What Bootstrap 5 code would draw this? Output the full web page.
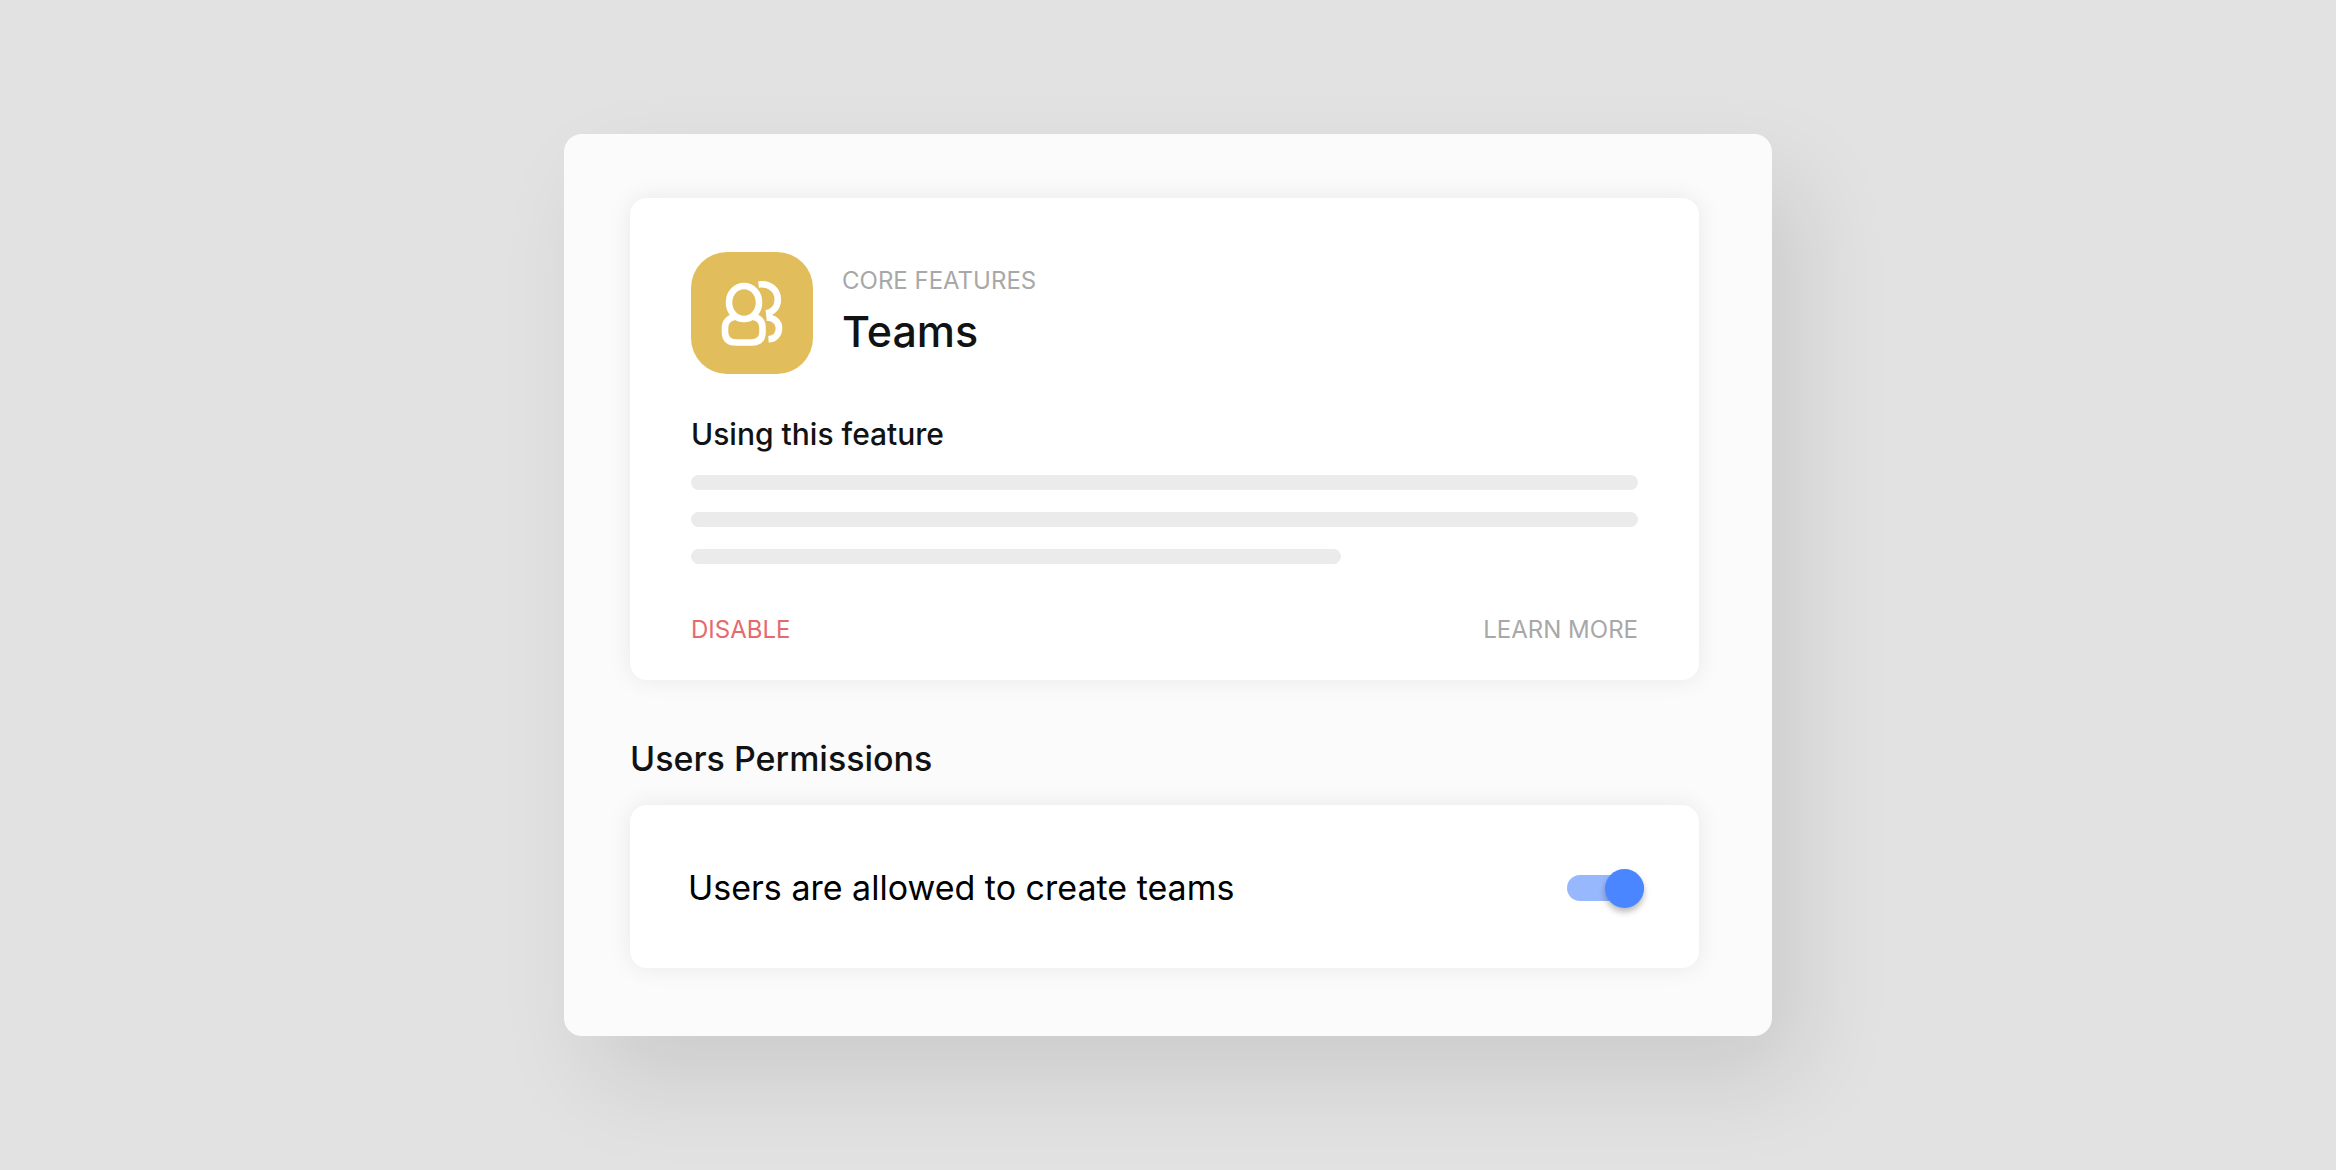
<!DOCTYPE html>
<html lang="en">
<head>
<meta charset="utf-8">
<meta name="viewport" content="width=device-width, initial-scale=1">
<title>Teams</title>
<link href="https://cdn.jsdelivr.net/npm/bootstrap@5.3.0/dist/css/bootstrap.min.css" rel="stylesheet">
<style>
  body { background: #e2e2e2; font-family: Inter, "Liberation Sans", sans-serif; color: #111213; }
  .settings-panel { width: 100%; max-width: 1208px; padding: 64px 73px 68px 66px; border-radius: 18px; background: #fbfbfb; box-shadow: 28px 44px 96px rgba(0,0,0,.1); }
  .tile { border: 0; border-radius: 17px; box-shadow: 0 0 24px rgba(0,0,0,.08); }
  .feature-body { padding: 54px 61px 32px; }
  .feature-icon { width: 122px; height: 122px; border-radius: 36px; background: #e1bd5c; }
  .feature-head { gap: 29px; }
  .eyebrow, .action { font-size: 24px; line-height: 36px; font-weight: 400; color: #a8a8a8; }
  .eyebrow { margin-bottom: 4px; }
  .action-danger { color: #e56a6e; }
  .feature-title { font-size: 43px; line-height: 56px; font-weight: 500; }
  .feature-sub { font-size: 30px; line-height: 40px; font-weight: 500; margin: 40px 0 21px; }
  .skeleton { gap: 22px; margin-bottom: 48px; }
  .bar { height: 15px; border-radius: 8px; background: #ebebeb; }
  .bar-short { width: 68.6%; }
  .section-title { font-size: 34px; line-height: 44px; font-weight: 500; margin: 57px 0 24px; }
  .option-body { padding: 59px 55px 56px 58px; }
  .option-label { font-size: 34px; line-height: 48px; color: #000; }
  .form-switch .toggle { position: relative; width: 77px; height: 26px; margin: 0; border: 0; border-radius: 13px; background: #c8c8c8; }
  .form-switch .toggle:checked { background: #98b8fd; }
  .toggle::before { content: ""; position: absolute; top: -6px; left: 0; width: 39px; height: 39px; border-radius: 50%; background: #fff; box-shadow: 0 4px 6px rgba(0,0,0,.28); }
  .toggle:checked::before { left: auto; right: 0; background: #4a86ff; }
</style>
</head>
<body>
<main class="min-vh-100 d-flex align-items-center justify-content-center">
  <div class="settings-panel">
    <section class="card tile">
      <div class="feature-body">
        <header class="feature-head d-flex align-items-center">
          <div class="feature-icon flex-shrink-0">
            <svg width="122" height="122" viewBox="0 0 122 122" fill="none" stroke="#fff" stroke-width="6.6" aria-hidden="true">
              <ellipse cx="53" cy="50.500" rx="15" ry="16.500"/>
              <path d="M43.500 65C37 66 34 70.500 34 76V80Q34 90.500 45 90.500H60.500Q71.500 90.500 71.500 80V76C71.500 70.500 69 66 62.500 65"/>
              <path d="M67.500 32.500C79 31 86.800 38 86.800 47.500C86.800 55 82 60.500 75 61.500"/>
              <path d="M75.500 65.500C83.500 65.500 88 70.500 88 76C88 82.500 84 87 77.500 87.300"/>
            </svg>
          </div>
          <div class="pb-1">
            <p class="eyebrow">CORE FEATURES</p>
            <h1 class="feature-title mb-0">Teams</h1>
          </div>
        </header>
        <h2 class="feature-sub">Using this feature</h2>
        <div class="skeleton d-flex flex-column" aria-hidden="true">
          <div class="bar"></div>
          <div class="bar"></div>
          <div class="bar bar-short"></div>
        </div>
        <div class="d-flex justify-content-between">
          <button type="button" class="btn p-0 border-0 action action-danger">DISABLE</button>
          <a href="#" class="text-decoration-none action">LEARN MORE</a>
        </div>
      </div>
    </section>
    <h2 class="section-title">Users Permissions</h2>
    <section class="card tile">
      <div class="option-body form-switch d-flex align-items-center justify-content-between">
        <label class="option-label" for="createTeams">Users are allowed to create teams</label>
        <input class="form-check-input toggle flex-shrink-0" type="checkbox" role="switch" id="createTeams" checked>
      </div>
    </section>
  </div>
</main>
<script src="https://cdn.jsdelivr.net/npm/bootstrap@5.3.0/dist/js/bootstrap.bundle.min.js"></script>
</body>
</html>
